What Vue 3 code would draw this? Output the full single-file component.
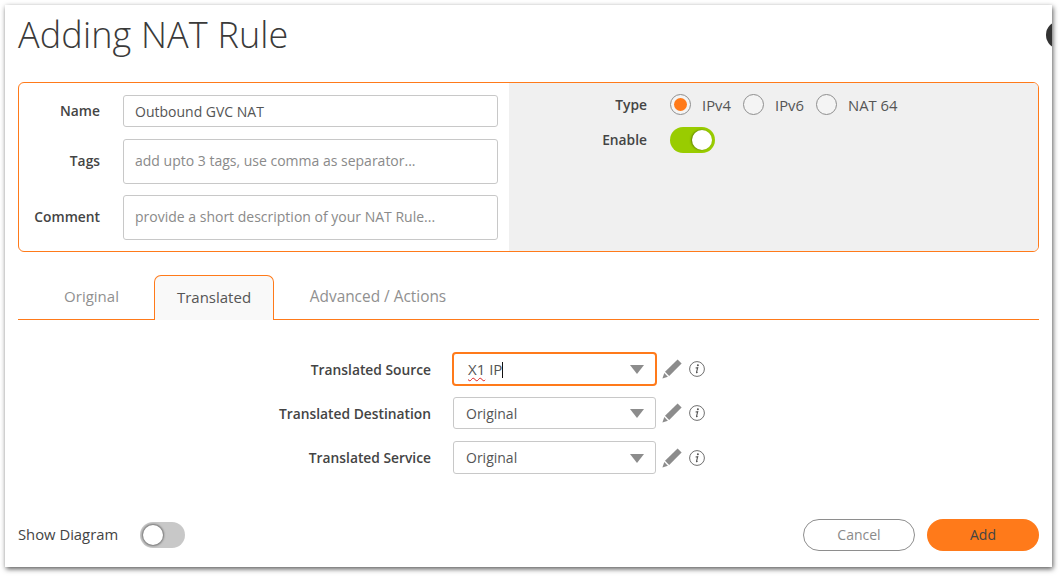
<script setup>
const fields = [
  { label: 'Name', value: 'Outbound GVC NAT', placeholder: '', tall: false },
  { label: 'Tags', value: '', placeholder: 'add upto 3 tags, use comma as separator...', tall: true },
  { label: 'Comment', value: '', placeholder: 'provide a short description of your NAT Rule...', tall: true }
]
const radios = [
  { label: 'IPv4', on: true },
  { label: 'IPv6', on: false },
  { label: 'NAT 64', on: false }
]
const rows = [
  { label: 'Translated Source', focus: true },
  { label: 'Translated Destination', value: 'Original' },
  { label: 'Translated Service', value: 'Original' }
]
</script>

<template>
  <div class="page">
    <div class="card">
      <h1 class="title">Adding NAT Rule</h1>
      <span class="close"></span>

      <section class="panel">
        <div class="panel-left">
          <div v-for="f in fields" :key="f.label" class="field" :class="{ tall: f.tall }">
            <label class="lab">{{ f.label }}</label>
            <input class="inp" :class="{ tall: f.tall }" :value="f.value" :placeholder="f.placeholder" />
          </div>
        </div>
        <div class="panel-right">
          <div class="r-row">
            <span class="lab r-lab">Type</span>
            <div class="radios">
              <span v-for="r in radios" :key="r.label" class="radio-item">
                <span class="radio" :class="{ on: r.on }"></span>
                <span class="radio-text">{{ r.label }}</span>
              </span>
            </div>
          </div>
          <div class="r-row enable">
            <span class="lab r-lab">Enable</span>
            <span class="toggle on"><span class="knob"></span></span>
          </div>
        </div>
      </section>

      <nav class="tabs">
        <span class="tab t1">Original</span>
        <span class="tab active">Translated</span>
        <span class="tab t3">Advanced / Actions</span>
      </nav>

      <section class="rows">
        <div v-for="r in rows" :key="r.label" class="row">
          <span class="lab row-lab">{{ r.label }}</span>
          <div class="select" :class="{ focus: r.focus }">
            <span v-if="r.focus" class="sel-text typed"><span class="spell">X1</span> IP<i class="cursor"></i></span>
            <span v-else class="sel-text">{{ r.value }}</span>
            <span class="arrow"></span>
          </div>
          <svg class="pencil" viewBox="0 0 20 20" width="20" height="20">
            <path d="M15.6 0.6 L19.6 4.6 L7.2 17 L3 12.8 Z" fill="#8c8c8c" />
            <path d="M2.3 14 L5.9 17.7 L0.4 19.6 Z" fill="#8c8c8c" />
          </svg>
          <svg class="info" viewBox="0 0 16 16" width="16" height="16">
            <circle cx="8" cy="8" r="7.4" fill="none" stroke="#6f6f6f" stroke-width="1" />
            <circle cx="8.9" cy="4.2" r="1" fill="#555" />
            <path d="M6.6 7 L8.7 6.7 L7.5 11.4 Q7.4 12 8.6 11.2" fill="none" stroke="#555" stroke-width="1.1" />
          </svg>
        </div>
      </section>

      <footer class="foot">
        <span class="lab show">Show Diagram</span>
        <span class="toggle off"><span class="knob"></span></span>
        <span class="spacer"></span>
        <button class="btn cancel">Cancel</button>
        <button class="btn add">Add</button>
      </footer>
    </div>
  </div>
</template>

<style>
html, body { margin: 0; background: #fff; }
</style>

<style scoped>
.page {
  box-sizing: border-box;
  height: 576px;
  padding: 5px 0 0 5px;
  overflow: hidden;
}
.card {
  position: relative;
  box-sizing: border-box;
  width: 1047px;
  height: 562px;
  padding: 0 13px;
  background: #fff;
  overflow: hidden;
  box-shadow: 1px 2px 5px rgba(0, 0, 0, .65);
  font-family: "Open Sans", "Noto Sans", sans-serif;
  color: #444;
  display: flex;
  flex-direction: column;
}
.title {
  margin: 10px 0 0;
  height: 67px;
  font-size: 36px;
  line-height: 40px;
  font-weight: 300;
  letter-spacing: .15px;
  color: #3a3a3a;
}
.close {
  position: absolute;
  left: 1041px;
  top: 16px;
  width: 28px;
  height: 28px;
  border-radius: 50%;
  background: #333;
}
.panel {
  box-sizing: border-box;
  height: 170px;
  border: 1px solid #ff7a1a;
  border-radius: 6px;
  display: flex;
  overflow: hidden;
}
.panel-left {
  box-sizing: border-box;
  width: 490px;
  padding: 12px 11px 0 0;
  display: flex;
  flex-direction: column;
  gap: 12px;
}
.panel-left .field + .field + .field { margin-top: -1px; }
.field { display: flex; align-items: center; gap: 23px; }
.lab { font-size: 13.8px; font-weight: 600; color: #444; }
.field .lab { width: 81px; text-align: right; flex: none; padding-bottom: 2px; }
.inp {
  box-sizing: border-box;
  flex: 1;
  min-width: 0;
  height: 32px;
  padding: 0 11px;
  border: 1px solid #c8c8c8;
  border-radius: 3px;
  font: inherit;
  font-size: 14px;
  color: #555;
  outline: none;
}
.inp.tall { height: 45px; padding-bottom: 2px; }
.inp::placeholder { color: #8a8a8a; opacity: 1; }
.panel-right {
  flex: 1;
  background: #f0f0f0;
  padding: 9px 0 0;
}
.r-row { display: flex; align-items: center; height: 25px; }
.enable { margin-top: 10px; }
.r-lab { width: 138px; text-align: right; flex: none; margin-right: 23px; }
.radios { display: flex; }
.radio-item { display: flex; align-items: center; width: 73px; }
.radio {
  box-sizing: border-box;
  width: 21px;
  height: 21px;
  border: 1px solid #8e8e8e;
  border-radius: 50%;
  background: #f4f4f4;
  margin-right: 11px;
  flex: none;
  display: flex;
  align-items: center;
  justify-content: center;
}
.radio.on::after {
  content: "";
  width: 13px;
  height: 13px;
  border-radius: 50%;
  background: #ff7a1a;
}
.radio-text { font-size: 14.8px; color: #555; white-space: nowrap; }
.toggle {
  position: relative;
  display: inline-block;
  box-sizing: border-box;
  width: 45px;
  height: 26px;
  border-radius: 13px;
  flex: none;
}
.toggle.on { background: #9c0; }
.toggle.off { background: #c8c8c8; }
.knob {
  position: absolute;
  top: 3px;
  width: 20px;
  height: 20px;
  border-radius: 50%;
  background: #fff;
}
.on .knob { right: 3px; box-shadow: -1px 0 2px #5e7d00; }
.off .knob { left: 3px; box-shadow: 0 0 2px 1px #777; }
.tabs {
  margin-top: 23px;
  height: 44px;
  border-bottom: 1px solid #ff7a1a;
  display: flex;
  font-size: 15px;
  color: #909090;
}
.tab { box-sizing: border-box; display: flex; align-items: center; justify-content: center; height: 44px; padding-bottom: 2px; }
.t1 { width: 136px; padding-left: 11px; }
.t3 { width: 208px; font-size: 15.4px; }
.active {
  width: 120px;
  height: 45px;
  background: #f9f9f9;
  color: #555;
  border: 1px solid #ff7a1a;
  border-bottom: 0;
  border-radius: 7px 7px 0 0;
  padding-bottom: 3px;
}
.rows { margin-top: 32px; display: flex; flex-direction: column; }
.row { display: flex; align-items: center; height: 32px; margin-bottom: 12px; }
.row:first-child { height: 34px; margin-bottom: 11px; }
.row:nth-child(2) { margin-bottom: 12px; }
.row:nth-child(3) { height: 33px; }
.row-lab { width: 413px; text-align: right; margin-right: 22px; flex: none; }
.select {
  box-sizing: border-box;
  position: relative;
  width: 203px;
  height: 100%;
  border: 1px solid #c8c8c8;
  border-radius: 3px;
  padding: 0 12px;
  display: flex;
  align-items: center;
  font-size: 14px;
  color: #555;
}
.select.focus {
  width: 205px;
  margin: 0 -1px;
  border: 2px solid #ff7a1a;
  border-radius: 4px;
  padding-left: 14px;
}
.typed { font-size: 15px; }
.spell { text-decoration: underline wavy #e02020 1px; text-underline-offset: 2px; }
.cursor {
  display: inline-block;
  width: 1px;
  height: 16px;
  background: #111;
  vertical-align: -3px;
}
.arrow {
  position: absolute;
  right: 11px;
  top: 50%;
  margin-top: -4px;
  width: 0;
  height: 0;
  border-left: 7.5px solid transparent;
  border-right: 7.5px solid transparent;
  border-top: 9px solid #8c8c8c;
}
.pencil { margin-left: 6px; flex: none; }
.info { margin-left: 7px; flex: none; }
.foot {
  margin-top: auto;
  margin-bottom: 16px;
  display: flex;
  align-items: center;
  height: 32px;
}
.show { width: 122px; flex: none; font-size: 14.8px; font-weight: 500; padding-bottom: 2px; }
.spacer { flex: 1; }
.btn {
  box-sizing: border-box;
  width: 112px;
  height: 32px;
  border-radius: 16px;
  font: inherit;
  font-size: 14px;
  padding: 0 0 2px;
  cursor: pointer;
}
.cancel { background: #fff; border: 1px solid #8e8e8e; color: #8a8a8a; margin-right: 12px; }
.add { background: #ff7a1a; border: 0; color: #444; }
</style>
